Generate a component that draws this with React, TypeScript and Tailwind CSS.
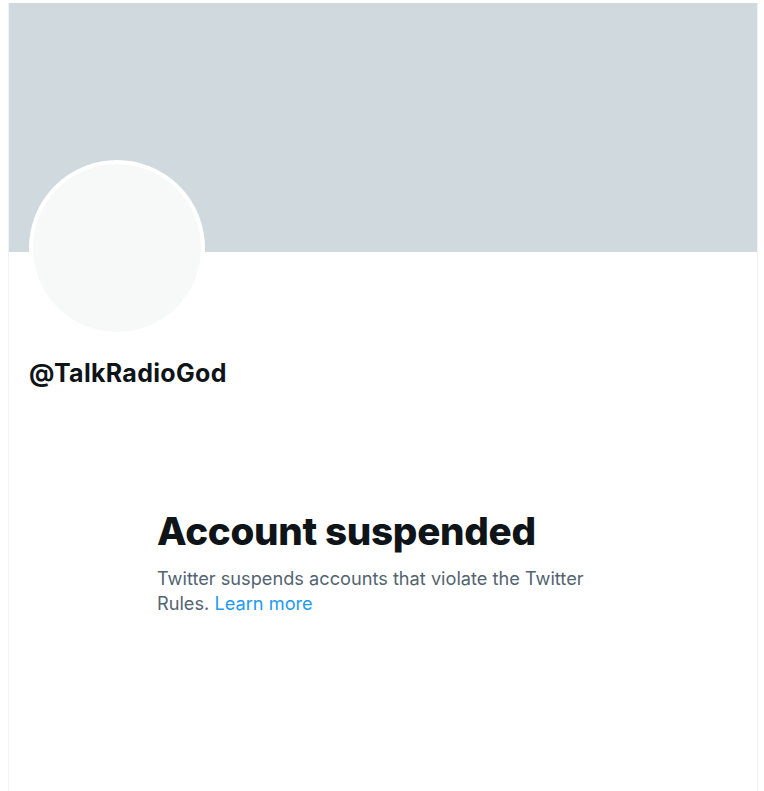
const App = () => {
    return (
        <div className="min-h-[791px] w-full bg-white pt-[3px] font-['Inter','Noto_Sans',sans-serif] text-[#0f1419]">
            <div className="ml-[8px] flex min-h-[788px] w-[750px] flex-col border-x border-[#eff3f4]">
                <div className="h-[249px] w-full bg-[#cfd9de]" />

                <div className="px-[20px]">
                    <div className="-mt-[92px] h-[176px] w-[176px] rounded-full border-[4px] border-white bg-[#f7f9f9]" />
                    <div className="mt-[22px] text-[25px] font-bold leading-[30px] tracking-[0.3px]">@TalkRadioGod</div>
                </div>

                <div className="mx-auto mt-[121px] w-[452px]">
                    <h1 className="text-[38.6px] font-extrabold leading-[45px] tracking-[-0.3px]">Account suspended</h1>
                    <p className="mt-[12px] text-[18.2px] leading-[25px] text-[#536471]">
                        Twitter suspends accounts that violate the Twitter Rules.{' '}
                        <span className="text-[#1d9bf0]">Learn more</span>
                    </p>
                </div>
            </div>
        </div>
    );
};

export default App;
